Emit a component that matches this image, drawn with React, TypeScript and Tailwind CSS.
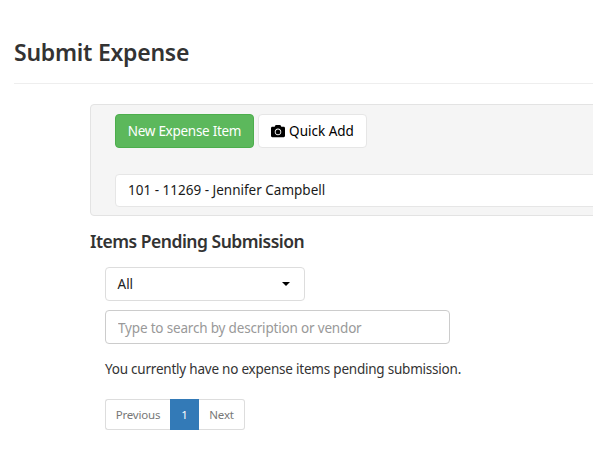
import { FaCamera } from "react-icons/fa";

export default function App() {
  return (
    <div className="w-[593px] h-[452px] overflow-hidden bg-white font-['Noto_Sans',sans-serif] text-[13.5px] text-[#333333]">
      <div className="pl-[14px] pt-[36px]">
        <h1 className="h-[48px] border-b border-[#eeeeee] text-[23px] leading-[32px] font-semibold tracking-[-0.25px]">
          Submit Expense
        </h1>
      </div>
      <div className="pl-[90px] pt-[20px]">
        <div className="w-[600px] h-[112px] rounded-[4px] border border-[#e3e3e3] bg-[#f5f5f5] pl-[24px] pt-[9px]">
          <div className="flex gap-[4px]">
            <button className="h-[34px] w-[139px] rounded-[4px] border border-[#4cae4c] bg-[#5cb85c] text-white tracking-[-0.28px]">
              New Expense Item
            </button>
            <button className="flex h-[34px] w-[109px] items-center justify-center gap-[4px] rounded-[4px] border border-[#e6e6e6] bg-white text-black">
              <FaCamera className="h-[14px] w-[14px]" />
              Quick Add
            </button>
          </div>
          <div className="mt-[26px] flex h-[33px] w-[560px] items-center rounded-[4px] border border-[#e6e6e6] bg-white pl-[12px] text-[#1a1a1a]">
            101 - 11269 - Jennifer Campbell
          </div>
        </div>
        <h2 className="mt-[12px] text-[17.5px] leading-[26px] font-semibold tracking-[-0.5px]">
          Items Pending Submission
        </h2>
        <div className="flex flex-col items-start pl-[15px] pt-[13px]">
          <div className="flex h-[34px] w-[200px] items-center justify-between rounded-[4px] border border-[#dddddd] bg-white pl-[12px] pr-[14px] text-[#222222]">
            <span className="-ml-[0.5px]">All</span>
            <span className="h-0 w-0 border-x-[4px] border-t-[4px] border-x-transparent border-t-black" />
          </div>
          <input
            readOnly
            placeholder="Type to search by description or vendor"
            className="mt-[9px] h-[34px] w-[345px] rounded-[4px] border border-[#cccccc] bg-white px-[12px] pt-[2px] tracking-[-0.18px] placeholder:text-[#999999] outline-none"
          />
          <p className="mt-[15px] leading-[20px] tracking-[-0.22px]">
            You currently have no expense items pending submission.
          </p>
          <nav className="mt-[20px] flex h-[31px] w-[140px] text-[11.5px]">
            <span className="flex w-[65px] items-center justify-center rounded-l-[3px] border border-r-0 border-[#dddddd] text-[#777777] tracking-[-0.2px]">
              Previous
            </span>
            <span className="flex w-[29px] items-center justify-center border border-[#337ab7] bg-[#337ab7] text-white">
              1
            </span>
            <span className="flex w-[46px] items-center justify-center rounded-r-[3px] border border-l-0 border-[#dddddd] text-[#777777] tracking-[-0.2px]">
              Next
            </span>
          </nav>
        </div>
      </div>
    </div>
  );
}
